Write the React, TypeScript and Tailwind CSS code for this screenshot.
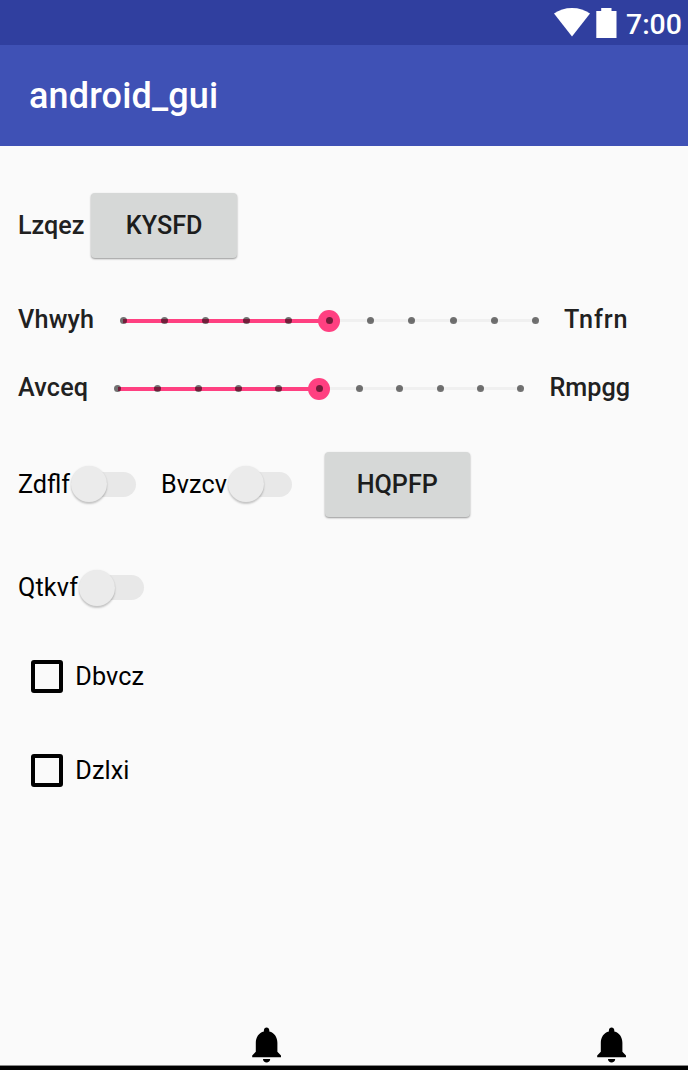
import type { ReactNode } from 'react';

const TICKS = Array.from({ length: 11 }, (_, i) => i);

function Slider({ className }: { className: string }) {
  return (
    <div className={`relative flex h-6 shrink-0 items-center ${className}`}>
      <div className="mx-[3.5px] h-[3px] flex-1 bg-[#f0f0f0]" />
      <div className="absolute top-[10px] left-[3.5px] right-1/2 h-1 bg-[#ff4081]" />
      <div className="absolute top-[1px] left-1/2 size-[22px] -translate-x-1/2 rounded-full bg-[#ff4081]" />
      <div className="absolute inset-0 flex items-center justify-between">
        {TICKS.map((t) => (
          <span key={t} className="size-[7px] rounded-full bg-black/55" />
        ))}
      </div>
    </div>
  );
}

function Toggle() {
  return (
    <div className="relative mb-px h-[36px] w-[65px] shrink-0">
      <div className="absolute top-[5.5px] right-[0.5px] h-[25px] w-[50px] rounded-full bg-[#e8e8e8]" />
      <div className="absolute top-0 left-0 size-[36px] rounded-full bg-[#ebebeb] shadow-[0_2px_2px_rgba(0,0,0,0.2),0_0_2px_rgba(0,0,0,0.08)]" />
    </div>
  );
}

function RaisedButton({ children }: { children: ReactNode }) {
  return (
    <button className="flex h-[65px] w-[145.5px] shrink-0 items-center justify-center rounded-[4px] bg-[#d6d8d7] font-medium text-[#1c1d1d] shadow-[0_1px_2px_rgba(0,0,0,0.4)]">
      {children}
    </button>
  );
}

function CheckItem({ label, className }: { label: string; className: string }) {
  return (
    <label className={`ml-[30.5px] flex h-8 items-center ${className}`}>
      <span className="-mt-px size-[32.5px] rounded-[3px] border-4 border-black" />
      <span className="ml-[12.3px] tracking-[0.1px]">{label}</span>
    </label>
  );
}

function Bell() {
  return (
    <svg className="-mt-[0.5px] size-[43.2px]" viewBox="0 0 24 24" fill="#000">
      <path d="M12 22c1.1 0 2-.9 2-2h-4c0 1.1.9 2 2 2zm6-6v-5c0-3.07-1.63-5.64-4.5-6.32V4c0-.83-.67-1.5-1.5-1.5s-1.5.67-1.5 1.5v.68C7.64 5.36 6 7.92 6 11v5l-2 2v1h16v-1l-2-2z" />
    </svg>
  );
}

export default function App() {
  return (
    <div className="flex h-[1070px] w-[688px] flex-col overflow-hidden bg-[#fafafa] font-['Roboto',sans-serif] text-[25.2px] leading-[30px] whitespace-nowrap text-black">
      <div className="flex h-[45px] shrink-0 items-start bg-[#303f9f] pl-[554px] text-white">
        <svg className="mt-2 h-[29px] w-9 shrink-0" viewBox="0 0 36 29" fill="currentColor">
          <path d="M0 5.6C5 2 11 0 18 0s13 2 18 5.6L18 28.5z" />
        </svg>
        <svg className="mt-2 ml-1.5 h-[30px] w-[21px] shrink-0" viewBox="0 0 21 30" fill="currentColor">
          <path d="M5.2 0h10.3v3H20.5v27H.3V3h4.9z" />
        </svg>
        <span className="mt-[9px] ml-[9px] text-[28.4px] leading-8 font-medium">7:00</span>
      </div>
      <header className="flex h-[101px] shrink-0 items-center bg-[#3f51b5] pl-[29px] text-[36px] font-medium tracking-[0.15px] text-white">
        android_gui
      </header>
      <main className="flex flex-1 flex-col">
        <div className="mt-[47px] flex h-[65px] shrink-0 items-center pl-[18px] text-[#212121]">
          <span className="w-[73.4px] font-medium">Lzqez</span>
          <RaisedButton>KYSFD</RaisedButton>
        </div>
        <div className="mt-[46px] flex h-[33px] shrink-0 items-center pl-[18px] font-medium text-[#212121]">
          <span className="mb-[2px] w-[101.5px] tracking-[0.2px]">Vhwyh</span>
          <Slider className="w-[419.5px]" />
          <span className="mb-[2px] ml-[25px] tracking-[0.9px]">Tnfrn</span>
        </div>
        <div className="mt-[35px] flex h-[33px] shrink-0 items-center pl-[18px] font-medium text-[#212121]">
          <span className="mb-[2px] w-[96px] tracking-[0.2px]">Avceq</span>
          <Slider className="w-[410.5px]" />
          <span className="mb-[2px] ml-[25px]">Rmpgg</span>
        </div>
        <div className="mt-[47px] flex h-[65px] shrink-0 items-center pl-[18px]">
          <span className="w-[53px]">Zdflf</span>
          <Toggle />
          <span className="ml-[25px] w-[66.5px] tracking-[0.1px]">Bvzcv</span>
          <Toggle />
          <div className="ml-[32px]">
            <RaisedButton>HQPFP</RaisedButton>
          </div>
        </div>
        <div className="mt-[53px] flex h-9 shrink-0 items-center pl-[18px]">
          <span className="mb-px w-[61px] tracking-[0.15px]">Qtkvf</span>
          <Toggle />
        </div>
        <CheckItem label="Dbvcz" className="mt-[55px]" />
        <CheckItem label="Dzlxi" className="mt-[62px]" />
      </main>
      <footer className="flex h-[42px] shrink-0 justify-between pr-[54.5px] pl-[244.7px]">
        <Bell />
        <Bell />
      </footer>
      <div className="h-[5px] shrink-0 border-t border-[#888] bg-black" />
    </div>
  );
}
